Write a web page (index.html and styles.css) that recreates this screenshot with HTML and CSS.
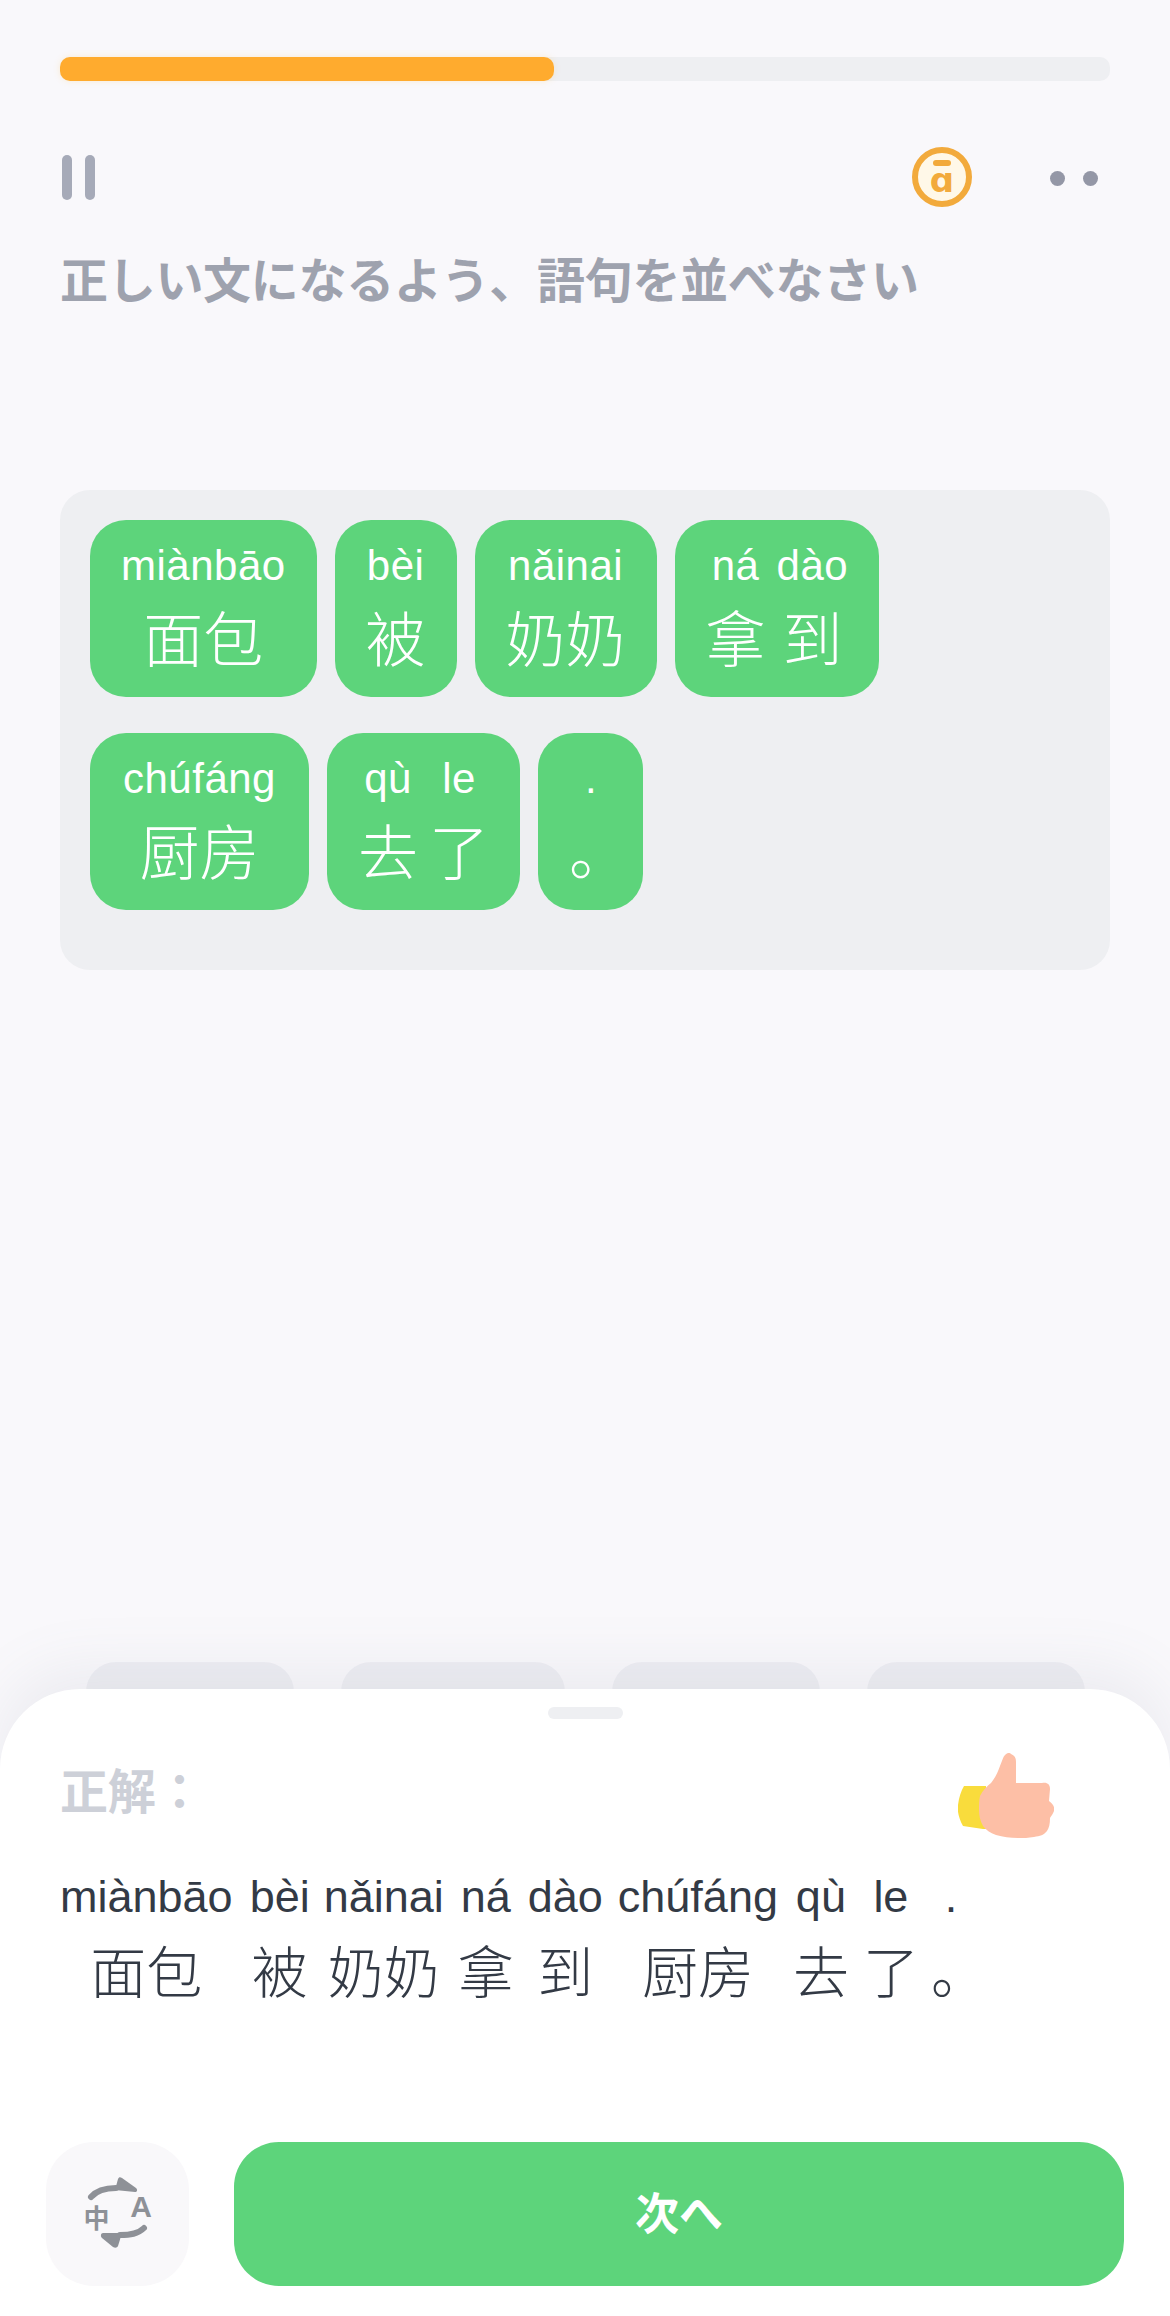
FILE: index.html
```html
<!DOCTYPE html>
<html lang="ja">
<head>
    <meta charset="UTF-8">
    <meta name="viewport" content="width=device-width, initial-scale=1.0">
    <title>語句を並べる</title>
    <link rel="stylesheet" href="styles.css">
</head>
<body>
    <div class="lesson">
        <div class="progress">
            <div class="progress-fill"></div>
        </div>

        <div class="toolbar">
            <div class="pause">
                <span></span>
                <span></span>
            </div>
            <div class="toolbar-right">
                <svg class="pinyin-toggle" width="60" height="60" viewBox="0 0 60 60">
                    <circle cx="30" cy="30" r="27" fill="#fff8e8" stroke="#f2aa3c" stroke-width="6"/>
                    <rect x="21" y="13" width="18" height="6" rx="3" fill="#f2aa3c"/>
                    <text class="pinyin-toggle-letter" x="30" y="45" text-anchor="middle">ɑ</text>
                </svg>
                <div class="more">
                    <span></span>
                    <span></span>
                </div>
            </div>
        </div>

        <h1 class="prompt">正しい文になるよう、語句を並べなさい</h1>

        <!-- 並べ終わった語句 -->
        <div class="answer-panel" lang="zh-CN">
            <div class="chip-row">
                <div class="chip">
                    <div class="word"><span class="py">miànbāo</span><span class="hz">面包</span></div>
                </div>
                <div class="chip">
                    <div class="word"><span class="py">bèi</span><span class="hz">被</span></div>
                </div>
                <div class="chip">
                    <div class="word"><span class="py">nǎinai</span><span class="hz">奶奶</span></div>
                </div>
                <div class="chip">
                    <div class="word"><span class="py">ná</span><span class="hz">拿</span></div>
                    <div class="word"><span class="py">dào</span><span class="hz">到</span></div>
                </div>
            </div>
            <div class="chip-row">
                <div class="chip">
                    <div class="word word-long"><span class="py">chúfáng</span><span class="hz">厨房</span></div>
                </div>
                <div class="chip">
                    <div class="word"><span class="py">qù</span><span class="hz">去</span></div>
                    <div class="word"><span class="py">le</span><span class="hz">了</span></div>
                </div>
                <div class="chip chip-punct">
                    <div class="word word-punct"><span class="py">.</span><span class="hz">。</span></div>
                </div>
            </div>
        </div>

        <!-- シートの後ろに隠れている選択肢 -->
        <div class="ghost-row">
            <div class="ghost ghost-a"></div>
            <div class="ghost ghost-b"></div>
            <div class="ghost ghost-a"></div>
            <div class="ghost ghost-c"></div>
        </div>
    </div>

    <div class="sheet">
        <div class="sheet-handle"></div>

        <div class="sheet-head">
            <div class="sheet-label">正解：</div>
            <svg class="thumb" width="96" height="85" viewBox="0 0 96 85">
                <path d="M6 33H28V76H25L5 73C1 66 -1 58 0 52C1 44 3 38 6 33Z" fill="#f9dc3c"/>
                <path d="M22 43C25 37 29 33 33 30C37 25 40 19 42 13C44 8 45 4 47 2C49 0 51 -1 53 1C57 3 58 5 58 9V30H84C89 29 92 31 92 36L91 48C95 51 97 54 96 58C95 61 93 63 92 65C92 71 91 75 89 78C86 82 82 83 76 84C70 85 66 85 60 85C52 85 45 84 38 82C32 80 28 77 25 73C22 68 21 62 21 57C21 52 21 47 22 43Z" fill="#fdbfa6"/>
            </svg>
        </div>

        <div class="solution" lang="zh-CN">
            <div class="word word-first"><span class="py">miànbāo</span><span class="hz">面包</span></div>
            <div class="word"><span class="py">bèi</span><span class="hz">被</span></div>
            <div class="word"><span class="py">nǎinai</span><span class="hz">奶奶</span></div>
            <div class="word"><span class="py">ná</span><span class="hz">拿</span></div>
            <div class="word"><span class="py">dào</span><span class="hz">到</span></div>
            <div class="word word-long"><span class="py">chúfáng</span><span class="hz">厨房</span></div>
            <div class="word"><span class="py">qù</span><span class="hz">去</span></div>
            <div class="word"><span class="py">le</span><span class="hz">了</span></div>
            <div class="word word-punct"><span class="py">.</span><span class="hz">。</span></div>
        </div>

        <div class="actions">
            <button class="translate-button">
                <svg width="80" height="80" viewBox="0 0 80 80">
                    <path d="M13 23C19 16 27 14 38 14" fill="none" stroke="#8e9197" stroke-width="6" stroke-linecap="round"/>
                    <path d="M37 16L40 5C41 3 42 3 44 4L58 14C60 16 59 18 57 18Z" fill="#8e9197"/>
                    <path d="M66 54C60 60 52 61 42 61" fill="none" stroke="#8e9197" stroke-width="6" stroke-linecap="round"/>
                    <path d="M44 59L40 72C39 74 37 74 35 73L24 64C22 62 23 59 25 59Z" fill="#8e9197"/>
                    <text class="translate-zh" x="18.5" y="54" text-anchor="middle">中</text>
                    <text class="translate-en" x="63" y="43" text-anchor="middle">A</text>
                </svg>
            </button>
            <button class="next-button">次へ</button>
        </div>
    </div>
</body>
</html>
```

FILE: styles.css
```css
body {
    margin: 0;
    width: 1170px;
    height: 2316px;
    position: relative;
    overflow: hidden;
    background-color: #f9f8fb;
    font-family: "Noto Sans CJK JP", "Liberation Sans", sans-serif;
}
.lesson {
    padding: 57px 60px 0;
}
.progress {
    height: 24px;
    border-radius: 10px;
    background-color: #eeeff2;
}
.progress-fill {
    width: 494px;
    height: 24px;
    border-radius: 10px;
    background-color: #ffab2e;
    box-shadow: 0 0 6px rgba(255, 200, 90, 0.25);
}
.toolbar {
    display: flex;
    justify-content: space-between;
    align-items: center;
    height: 60px;
    margin-top: 66px;
}
.pause {
    display: flex;
    gap: 13px;
    margin-left: 2px;
}
.pause span {
    width: 10px;
    height: 45px;
    border-radius: 5px;
    background-color: #a6aab8;
}
.toolbar-right {
    display: flex;
    align-items: center;
    gap: 78px;
    margin-right: 12px;
}
.pinyin-toggle {
    display: block;
}
.pinyin-toggle-letter {
    font-family: "DejaVu Sans", sans-serif;
    font-weight: bold;
    font-size: 34px;
    fill: #f2aa3c;
}
.more {
    display: flex;
    gap: 18px;
    margin-top: 2px;
}
.more span {
    width: 15px;
    height: 15px;
    border-radius: 50%;
    background-color: #9497a6;
}
.prompt {
    margin: 40px 0 0;
    font-size: 48px;
    line-height: 60px;
    letter-spacing: -0.3px;
    font-weight: bold;
    color: #9ea2ae;
}
.answer-panel {
    display: flex;
    flex-direction: column;
    gap: 36px;
    height: 420px;
    margin-top: 183px;
    padding: 30px;
    border-radius: 30px;
    background-color: #eeeff2;
}
.chip-row {
    display: flex;
    gap: 18px;
}
.chip {
    display: flex;
    gap: 11px;
    padding: 25px 31px 13px;
    border-radius: 36px;
    background-color: #5dd47b;
    color: white;
}
.chip-punct {
    padding-left: 23px;
    padding-right: 22px;
}
.word {
    display: flex;
    flex-direction: column;
    align-items: center;
}
.py {
    font-family: "Liberation Sans", sans-serif;
    font-size: 42px;
    line-height: 42px;
    letter-spacing: 0.5px;
    white-space: pre;
}
.hz {
    font-family: "Noto Sans CJK SC", sans-serif;
    font-size: 60px;
    font-weight: 300;
    line-height: 97px;
}
.word-punct .hz {
    transform: translateX(8px);
}
.chip .word-long {
    min-width: 157px;
}
.ghost-row {
    display: flex;
    gap: 47px;
    margin-top: 692px;
    padding-left: 26px;
}
.ghost {
    height: 60px;
    border-radius: 30px;
    background-color: #eeeef3;
}
.ghost-a {
    width: 208px;
}
.ghost-b {
    width: 224px;
}
.ghost-c {
    width: 218px;
}
.sheet {
    position: absolute;
    left: 0;
    right: 0;
    bottom: 0;
    height: 627px;
    box-sizing: border-box;
    display: flex;
    flex-direction: column;
    padding-top: 18px;
    border-radius: 80px 80px 0 0;
    background-color: white;
    box-shadow: 0 -20px 60px rgba(120, 125, 150, 0.1);
}
.sheet-handle {
    width: 75px;
    height: 12px;
    margin: 0 auto;
    border-radius: 6px;
    background-color: #eeeff2;
}
.sheet-head {
    display: flex;
    justify-content: space-between;
    align-items: flex-start;
    margin-top: 34px;
    padding: 0 116px 0 60px;
}
.sheet-label {
    margin-top: 5px;
    font-size: 48px;
    line-height: 60px;
    letter-spacing: -0.3px;
    font-weight: bold;
    color: #cdd0d8;
}
.thumb {
    display: block;
}
.solution {
    display: flex;
    gap: 14px;
    margin-top: 31px;
    padding-left: 60px;
    color: #333a45;
}
.solution .py {
    font-size: 45px;
    line-height: 56px;
    letter-spacing: 0;
}
.solution .hz {
    font-size: 56px;
    line-height: 88px;
}
.solution .word-first {
    margin-right: 3px;
}
.solution .word-long {
    min-width: 162px;
}
.solution .word-punct {
    margin-left: -10px;
}
.actions {
    display: flex;
    gap: 45px;
    margin-top: auto;
    padding: 0 46px 30px;
}
.translate-button {
    display: flex;
    align-items: center;
    justify-content: center;
    width: 143px;
    height: 144px;
    padding: 0;
    border: none;
    border-radius: 48px;
    background-color: #f9f8fa;
}
.translate-zh {
    font-family: "Noto Sans CJK SC", sans-serif;
    font-size: 26px;
    font-weight: bold;
    fill: #8e9197;
}
.translate-en {
    font-family: "Liberation Sans", sans-serif;
    font-weight: bold;
    font-size: 30px;
    fill: #8e9197;
}
.next-button {
    flex: 1;
    height: 144px;
    padding: 0 0 6px;
    border: none;
    border-radius: 45px;
    background-color: #5dd47b;
    color: white;
    font-family: "Noto Sans CJK JP", sans-serif;
    font-size: 44px;
    font-weight: bold;
}
```
